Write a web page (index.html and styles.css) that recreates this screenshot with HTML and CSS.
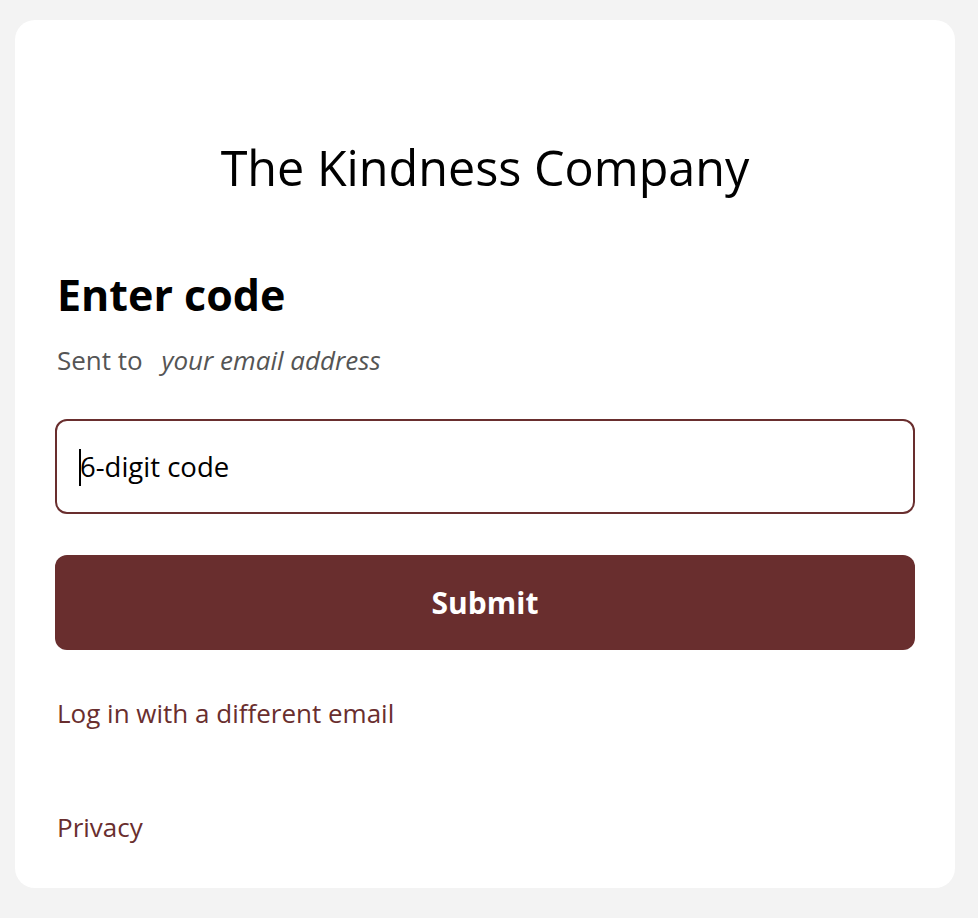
FILE: index.html
```html
<!DOCTYPE html>
<html lang="en">
<head>
  <meta charset="UTF-8" />
  <meta name="viewport" content="width=device-width, initial-scale=1.0" />
  <title>Enter code</title>
  <link rel="stylesheet" href="styles.css">
</head>
<body>
  <div class="card">
    <div class="brand">The Kindness Company</div>

    <h1>Enter code</h1>
    <p class="sent">Sent to <em>your email address</em></p>

    <form class="code-form" onsubmit="return false">
      <div class="field">
        <span class="caret"></span>
        <input type="text" value="6-digit code" aria-label="6-digit code">
      </div>
      <button type="submit">Submit</button>
    </form>

    <a class="link other" href="#">Log in with a different email</a>
    <a class="link privacy" href="#">Privacy</a>
  </div>
</body>
</html>
```

FILE: styles.css
```css
body {
  margin: 0;
  padding: 20px 23px 30px 15px;
  background: #f3f3f3;
  font-family: 'Open Sans', 'Noto Sans', sans-serif;
  color: #000;
}

.card {
  background: #fff;
  border-radius: 20px;
  padding: 114px 40px 43px;
  height: 868px;
  box-sizing: border-box;
  display: flex;
  flex-direction: column;
}

.brand {
  text-align: center;
  font-size: 48.5px;
  line-height: 66px;
  font-weight: 400;
  margin-bottom: 66px;
}

h1 {
  margin: 0;
  font-size: 43px;
  line-height: 58px;
  font-weight: 700;
  padding-left: 2px;
}

.sent {
  margin: 18px 0 0;
  padding-left: 2px;
  font-size: 26px;
  line-height: 36px;
  color: #555;
}

.sent em {
  margin-left: 12px;
}

.code-form {
  margin-top: 41px;
}

.field {
  position: relative;
}

.field input {
  display: block;
  width: 100%;
  height: 95px;
  box-sizing: border-box;
  border: 2px solid #692e2e;
  border-radius: 12px;
  padding: 0 23px;
  font-family: inherit;
  font-size: 27.5px;
  color: #000;
  outline: none;
}

.caret {
  position: absolute;
  left: 24px;
  top: 30px;
  width: 2px;
  height: 37px;
  background: #000;
}

button {
  display: block;
  width: 100%;
  height: 95px;
  margin-top: 41px;
  border: none;
  border-radius: 12px;
  background: #692e2e;
  color: #fff;
  font-family: inherit;
  font-size: 30px;
  font-weight: 700;
  cursor: pointer;
}

.link {
  color: #692e2e;
  text-decoration: none;
  font-size: 26px;
  line-height: 36px;
  padding-left: 2px;
  align-self: flex-start;
}

.other {
  margin-top: 45px;
}

.privacy {
  margin-top: auto;
}
```
